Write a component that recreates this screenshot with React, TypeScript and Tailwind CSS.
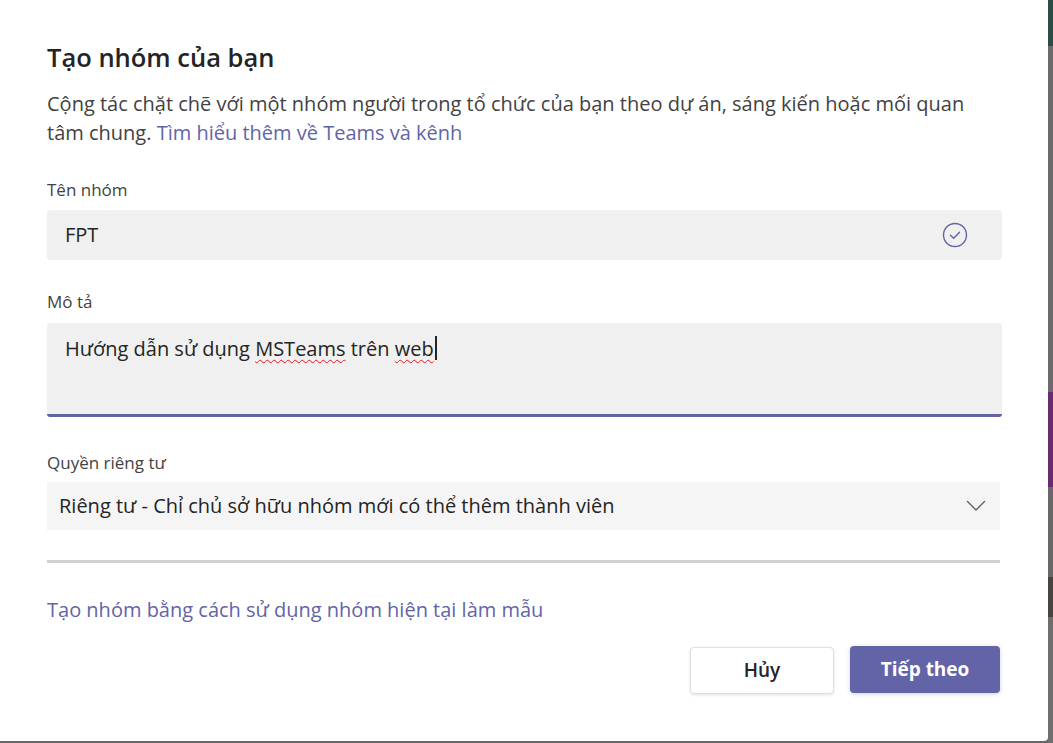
import React from "react";

const font = { fontFamily: '"Open Sans", "Noto Sans", sans-serif' };

const CheckCircle = () => (
  <svg width="26" height="26" viewBox="0 0 26 26" fill="none">
    <circle cx="13" cy="13" r="11.5" stroke="#6264a7" strokeWidth="1.4" />
    <path d="M8.5 13.3 L11.7 16.3 L17.5 10.2" stroke="#6264a7" strokeWidth="1.4" strokeLinecap="round" strokeLinejoin="round" />
  </svg>
);

const Chevron = () => (
  <svg width="20" height="12" viewBox="0 0 20 12" fill="none">
    <path d="M1.5 1.5 L10 10 L18.5 1.5" stroke="#616161" strokeWidth="1.4" strokeLinecap="round" strokeLinejoin="round" />
  </svg>
);

const Squiggle = ({ children }: { children: React.ReactNode }) => (
  <span className="underline decoration-wavy decoration-[#e81123] decoration-1 underline-offset-[3px]">{children}</span>
);

export default function App() {
  return (
    <div className="flex h-[743px] w-full overflow-hidden bg-[#666666]" style={font}>
      <div className="flex h-[741px] w-[1048px] shrink-0 flex-col rounded-br-[4px] bg-white px-[47px] pt-[39px]">
        <h1 className="text-[25.5px] font-semibold leading-[36px] text-[#242424]">Tạo nhóm của bạn</h1>
        <p className="mt-[14px] pr-[20px] text-[20px] leading-[29px] text-[#424242]">
          Cộng tác chặt chẽ với một nhóm người trong tổ chức của bạn theo dự án, sáng kiến hoặc mối quan tâm chung.{" "}
          <span className="text-[#6264a7]">Tìm hiểu thêm về Teams và kênh</span>
        </p>

        <label className="mt-[32px] text-[17px] leading-[22px] text-[#424242]">Tên nhóm</label>
        <div className="mt-[9px] flex h-[50px] w-[955px] items-center justify-between rounded-[4px] bg-[#f0f0f0] pl-[18px] pr-[34px]">
          <span className="text-[20px] text-[#242424]">FPT</span>
          <CheckCircle />
        </div>

        <label className="mt-[31px] text-[17px] leading-[22px] text-[#424242]">Mô tả</label>
        <div className="mt-[10px] h-[94px] w-[955px] rounded-t-[4px] rounded-b-[3px] border-b-[3px] border-[#6264a7] bg-[#f0f0f0] pl-[18px] pt-[9px]">
          <span className="text-[20px] leading-[28px] text-[#242424]">
            Hướng dẫn sử dụng <Squiggle>MSTeams</Squiggle> trên <Squiggle>web</Squiggle>
            <span className="ml-px inline-block h-[24px] w-[2px] translate-y-[4px] bg-[#242424]" />
          </span>
        </div>

        <label className="mt-[35px] text-[17px] leading-[22px] text-[#424242]">Quyền riêng tư</label>
        <div className="mt-[8px] flex h-[48px] w-[953px] items-center justify-between bg-[#f5f5f5] pl-[12px] pr-[14px]">
          <span className="text-[20px] text-[#242424]">Riêng tư - Chỉ chủ sở hữu nhóm mới có thể thêm thành viên</span>
          <Chevron />
        </div>

        <div className="mt-[30px] h-[3px] w-[953px] bg-[#d1d1d1]" />

        <div className="mt-[33px] text-[20px] leading-[28px] text-[#6264a7]">Tạo nhóm bằng cách sử dụng nhóm hiện tại làm mẫu</div>

        <div className="mt-[22px] flex w-[953px] items-start justify-end gap-[16px]">
          <button className="mt-px h-[47px] w-[144px] rounded-[4px] border border-[#e0e0e0] bg-white text-[19px] font-semibold text-[#242424] shadow-[0_1px_3px_rgba(0,0,0,0.12)]">
            Hủy
          </button>
          <button className="h-[47px] w-[150px] rounded-[4px] bg-[#6264a7] text-[19px] font-bold text-white shadow-[0_1px_4px_rgba(98,100,167,0.3)]">
            Tiếp theo
          </button>
        </div>
      </div>

      <div className="flex h-[743px] flex-1 flex-col">
        <div className="h-[46px] bg-[#2d4a45]" />
        <div className="h-[346px] bg-[#6b6b6b]" />
        <div className="h-[95px] bg-[#6a2a6e]" />
        <div className="h-[90px] bg-[#686868]" />
        <div className="h-[40px] bg-[#4a4440]" />
        <div className="flex-1 bg-[#6e6e6e]" />
      </div>
    </div>
  );
}
